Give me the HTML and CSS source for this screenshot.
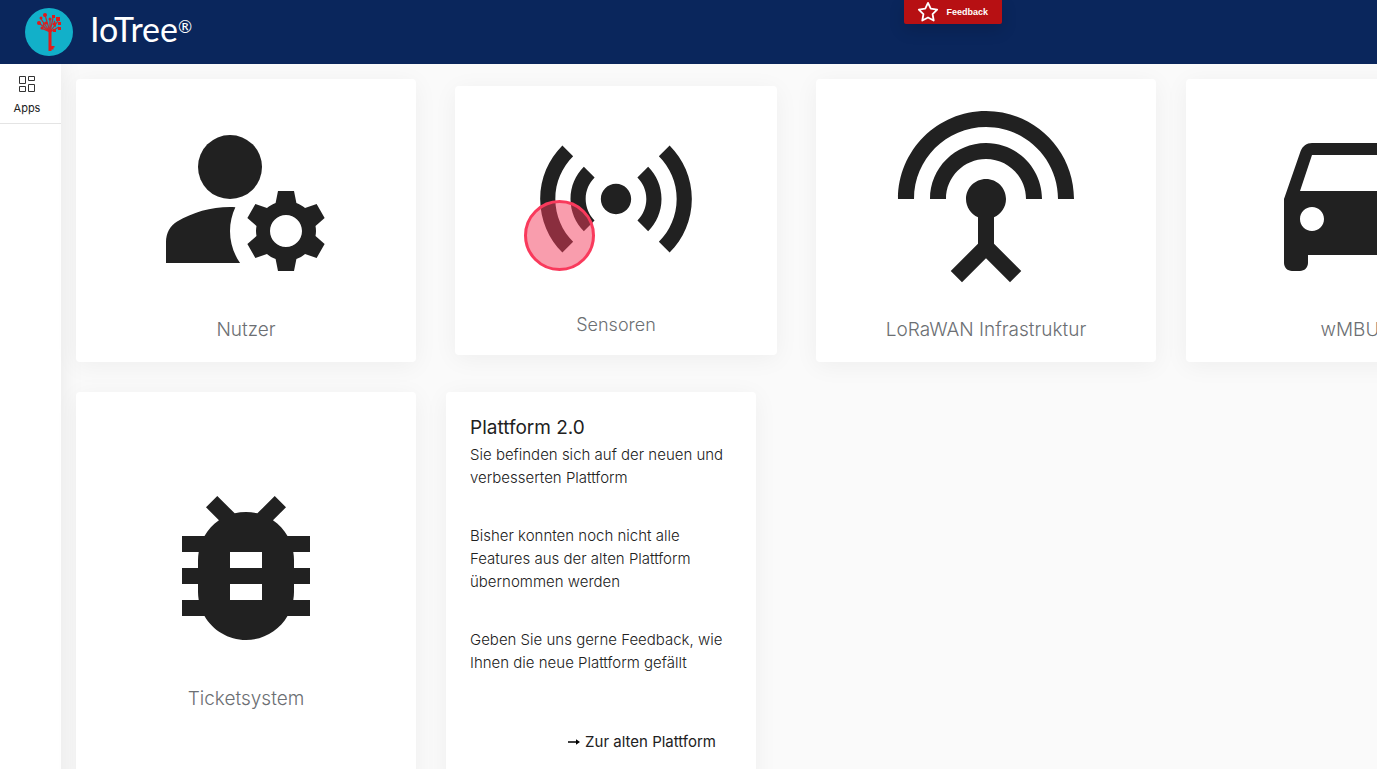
FILE: index.html
```html
<!DOCTYPE html>
<html lang="de">
<head>
    <meta charset="UTF-8">
    <meta name="viewport" content="width=device-width, initial-scale=1.0">
    <title>IoTree</title>
    <link rel="stylesheet" href="styles.css">
</head>
<body>
    <header class="topbar">
        <a href="#" class="brand">
            <svg class="brand-logo" viewBox="0 0 48 48" aria-hidden="true">
                <circle cx="24" cy="24" r="24" fill="#12b0c9"/>
                <g fill="none" stroke="#c8282c" stroke-width="1.2">
                    <path d="M25 24L20 7M25 24L16 11M25 24L14 15M25 24L16 20M25 24L25 11M25 24L28 10M25 24L33 13M25 24L34 19"/>
                    <path d="M19 14a6 6 0 0 0 2 7M29 13a6 6 0 0 1 1 6"/>
                </g>
                <path d="M23.500 22h3v16h3v1.500h-1v2h-2V43h-3z" fill="#e01b1b"/>
                <g fill="#e01b1b">
                    <circle cx="20" cy="7" r="2"/>
                    <circle cx="16" cy="10" r="1.5"/>
                    <circle cx="14" cy="15" r="2"/>
                    <circle cx="17" cy="20" r="1.500"/>
                    <circle cx="25" cy="11" r="1.500"/>
                    <rect x="27" y="7" width="3" height="3"/>
                    <rect x="31" y="9" width="4" height="4"/>
                    <rect x="33" y="14" width="3" height="3"/>
                    <rect x="33" y="19" width="3" height="3"/>
                    <circle cx="21" cy="15" r="1.500"/>
                    <circle cx="29" cy="16" r="1.500"/>
                    <rect x="28" y="21" width="3" height="3"/>
                </g>
            </svg>
            <span class="brand-name">IoTree<sup>®</sup></span>
        </a>
        <button type="button" class="feedback">
            <svg viewBox="0 0 24 24" aria-hidden="true">
                <path d="M12 2l3 6.400 7 1-5 4.900 1.200 7-6.200-3.300-6.200 3.300 1.200-7-5-4.900 7-1z"/>
            </svg>
            Feedback
        </button>
    </header>

    <div class="layout">
        <nav class="sidebar">
            <a href="#" class="sidebar-item">
                <svg viewBox="0 0 18 18" aria-hidden="true">
                    <path d="M1.500 1.500h6v7h-6zM10.500 1.500h6v4h-6zM1.500 11.500h6v5h-6zM10.500 9.500h6v7h-6z"/>
                </svg>
                Apps
            </a>
        </nav>

        <main class="content">
            <div class="row">
                <a href="#" class="card">
                    <svg class="card-icon" viewBox="0 0 24 24" aria-hidden="true">
                        <circle cx="10" cy="8" r="4"/>
                        <path d="M10.67 13.02C10.45 13.01 10.23 13 10 13c-2.42 0-4.68.67-6.61 1.82C2.51 15.34 2 16.32 2 17.35V20h9.26C10.47 18.87 10 17.49 10 16c0-1.07.25-2.07.67-2.98z"/>
                        <path d="M20.75 16c0-.22-.03-.42-.06-.63l1.14-1.01-1-1.73-1.45.49c-.32-.27-.68-.48-1.08-.63L18 11h-2l-.3 1.49c-.4.15-.76.36-1.08.63l-1.45-.49-1 1.73 1.14 1.01c-.03.21-.06.41-.06.63s.03.42.06.63l-1.14 1.01 1 1.73 1.45-.49c.32.27.68.48 1.08.63L16 21h2l.3-1.49c.4-.15.76-.36 1.08-.63l1.45.49 1-1.73-1.14-1.01c.03-.21.06-.41.06-.63zM17 18c-1.1 0-2-.9-2-2s.9-2 2-2 2 .9 2 2-.9 2-2 2z"/>
                    </svg>
                    <span class="card-label">Nutzer</span>
                </a>
                <a href="#" class="card card-pressed">
                    <svg class="card-icon" viewBox="0 0 24 24" aria-hidden="true">
                        <path d="M7.76 16.24C6.67 15.16 6 13.66 6 12s.67-3.16 1.76-4.24l1.42 1.42C8.45 9.9 8 10.9 8 12s.45 2.1 1.17 2.83l-1.41 1.41zm8.48 0C17.33 15.16 18 13.66 18 12s-.67-3.16-1.76-4.24l-1.42 1.42C15.55 9.9 16 10.9 16 12s-.45 2.1-1.17 2.83l1.41 1.41zM12 10c-1.1 0-2 .9-2 2s.9 2 2 2 2-.9 2-2-.9-2-2-2zm8 2c0 2.21-.9 4.21-2.35 5.65l1.42 1.42C20.88 17.26 22 14.76 22 12s-1.12-5.26-2.93-7.07l-1.42 1.42C19.1 7.79 20 9.79 20 12zM6.35 6.35L4.93 4.93C3.12 6.74 2 9.24 2 12s1.12 5.26 2.93 7.07l1.42-1.42C4.9 16.21 4 14.21 4 12s.9-4.21 2.35-5.65z"/>
                    </svg>
                    <span class="card-label">Sensoren</span>
                    <span class="click-marker"></span>
                </a>
                <a href="#" class="card">
                    <svg class="card-icon" viewBox="0 0 24 24" aria-hidden="true">
                        <path d="M12 5c-3.87 0-7 3.13-7 7h2c0-2.76 2.24-5 5-5s5 2.24 5 5h2c0-3.87-3.13-7-7-7zm1 9.29c.88-.39 1.5-1.26 1.5-2.29 0-1.38-1.12-2.5-2.5-2.5S9.5 10.62 9.5 12c0 1.02.62 1.9 1.5 2.29v3.3L7.59 21 9 22.41l3-3 3 3L16.41 21 13 17.59v-3.3zM12 1C5.93 1 1 5.93 1 12h2c0-4.97 4.03-9 9-9s9 4.03 9 9h2c0-6.07-4.93-11-11-11z"/>
                    </svg>
                    <span class="card-label">LoRaWAN Infrastruktur</span>
                </a>
                <a href="#" class="card">
                    <svg class="card-icon" viewBox="0 0 24 24" aria-hidden="true">
                        <path d="M18.92 6.01C18.72 5.42 18.16 5 17.5 5h-11c-.66 0-1.21.42-1.42 1.01L3 12v8c0 .55.45 1 1 1h1c.55 0 1-.45 1-1v-1h12v1c0 .55.45 1 1 1h1c.55 0 1-.45 1-1v-8l-2.08-5.99zM6.5 16c-.83 0-1.5-.67-1.5-1.5S5.67 13 6.5 13s1.5.67 1.5 1.5S7.33 16 6.5 16zm11 0c-.83 0-1.5-.67-1.5-1.5s.67-1.5 1.5-1.5 1.5.67 1.5 1.5-.67 1.5-1.5 1.5zM5 11l1.5-4.5h11L19 11H5z"/>
                    </svg>
                    <span class="card-label">wMBUS</span>
                </a>
            </div>

            <div class="row">
                <a href="#" class="card">
                    <svg class="card-icon" viewBox="0 0 24 24" aria-hidden="true">
                        <path d="M20 8h-2.81c-.45-.78-1.07-1.45-1.82-1.96L17 4.41 15.59 3l-2.17 2.17C12.96 5.06 12.49 5 12 5c-.49 0-.96.06-1.41.17L8.41 3 7 4.41l1.62 1.63C7.88 6.55 7.26 7.22 6.81 8H4v2h2.09c-.05.33-.09.66-.09 1v1H4v2h2v1c0 .34.04.67.09 1H4v2h2.81c1.04 1.79 2.97 3 5.19 3s4.15-1.21 5.19-3H20v-2h-2.09c.05-.33.09-.66.09-1v-1h2v-2h-2v-1c0-.34-.04-.67-.09-1H20V8zm-6 8h-4v-2h4v2zm0-4h-4v-2h4v2z"/>
                    </svg>
                    <span class="card-label">Ticketsystem</span>
                </a>
                <section class="info">
                    <h2>Plattform 2.0</h2>
                    <p>Sie befinden sich auf der neuen und verbesserten Plattform</p>
                    <p>Bisher konnten noch nicht alle Features aus der alten Plattform übernommen werden</p>
                    <p>Geben Sie uns gerne Feedback, wie Ihnen die neue Plattform gefällt</p>
                    <a href="#" class="info-link">
                        <svg viewBox="0 0 12 8" aria-hidden="true">
                            <path d="M0 3.200h8V1.200L12 4 8 6.800V4.800H0z"/>
                        </svg>
                        Zur alten Plattform
                    </a>
                </section>
            </div>
        </main>
    </div>
</body>
</html>
```
FILE: styles.css
```css
* {
    box-sizing: border-box;
}

body {
    font-family: Inter, "Open Sans", sans-serif;
    margin: 0;
    min-height: 100vh;
    background-color: #fafafa;
    color: #212121;
    display: flex;
    flex-direction: column;
}

a {
    color: inherit;
    text-decoration: none;
}

.topbar {
    background-color: #0a265c;
    color: white;
    height: 64px;
    padding-left: 25px;
    display: flex;
    justify-content: space-between;
    align-items: center;
}

.brand {
    display: flex;
    align-items: center;
    gap: 17px;
}

.brand-logo {
    width: 48px;
    height: 48px;
}

.brand-name {
    font-family: Lato, sans-serif;
    font-size: 34px;
    line-height: 40px;
    padding-bottom: 7px;
}

.brand-name sup {
    font-size: 17px;
    line-height: 0;
    vertical-align: 9px;
}

.feedback {
    align-self: flex-start;
    display: flex;
    align-items: center;
    gap: 7px;
    height: 24px;
    margin-right: 375px;
    padding: 0 14px 0 13px;
    border: none;
    border-radius: 0 0 2px 2px;
    background-color: #b71013;
    box-shadow: 0 6px 16px rgba(0, 0, 0, 0.15);
    color: white;
    font-family: "Liberation Sans", sans-serif;
    font-size: 9px;
    font-weight: bold;
    cursor: pointer;
}

.feedback svg {
    width: 22px;
    height: 22px;
    fill: none;
    stroke: white;
    stroke-width: 2;
    stroke-linejoin: round;
}

.layout {
    flex: 1;
    display: flex;
    height: calc(100vh - 64px);
    overflow: hidden;
}

.sidebar {
    flex: 0 0 61px;
    background-color: white;
    box-shadow: 0 0 24px rgba(0, 0, 0, 0.08);
}

.sidebar-item {
    display: flex;
    flex-direction: column;
    align-items: center;
    gap: 7px;
    height: 60px;
    padding: 11px 7px 0 0;
    border-bottom: 1px solid #e4e4e4;
    font-size: 11px;
    line-height: 16px;
}

.sidebar-item svg {
    width: 18px;
    height: 18px;
    fill: none;
    stroke: #333;
}

.content {
    flex: 1;
    min-width: 0;
    padding: 15px;
    display: flex;
    flex-direction: column;
    gap: 30px;
}

.row {
    display: flex;
    gap: 30px;
}

.card {
    flex: 0 0 340px;
    display: flex;
    flex-direction: column;
    align-items: center;
    justify-content: center;
    gap: 23px;
    padding: 24px 24px 21px;
    background-color: white;
    border-radius: 4px;
    box-shadow: 0 4px 24px rgba(0, 0, 0, 0.05);
}

.card-icon {
    width: 192px;
    height: 192px;
    fill: #212121;
}

.card-label {
    font-size: 19px;
    font-weight: 300;
    line-height: 23px;
    color: #6c6f73;
}

.card-pressed {
    position: relative;
    flex-basis: 322px;
    margin: 7px 9px;
    padding: 22px 22px 19px;
}

.card-pressed .card-icon {
    width: 182px;
    height: 182px;
}

.card-pressed .card-label {
    font-size: 18px;
}

/* ring that shows where the card was clicked */
.click-marker {
    position: absolute;
    left: 69px;
    top: 114px;
    width: 71px;
    height: 71px;
    border: 3px solid #f93a5c;
    border-radius: 50%;
    background-color: rgba(243, 60, 92, 0.5);
}

.info {
    flex: 0 0 310px;
    padding: 22px 24px 33px;
    background-color: white;
    border-radius: 4px;
    box-shadow: 0 4px 24px rgba(0, 0, 0, 0.05);
}

.info h2 {
    margin: 0 0 2px;
    font-size: 19px;
    font-weight: 400;
    line-height: 27px;
}

.info p {
    margin: 0 0 35px;
    font-size: 15px;
    font-weight: 300;
    line-height: 23px;
}

.info-link {
    display: flex;
    align-items: center;
    justify-content: flex-end;
    gap: 5px;
    margin-top: 56px;
    padding-right: 16px;
    font-size: 15px;
    line-height: 23px;
}

.info-link svg {
    width: 12px;
    height: 8px;
}
```
